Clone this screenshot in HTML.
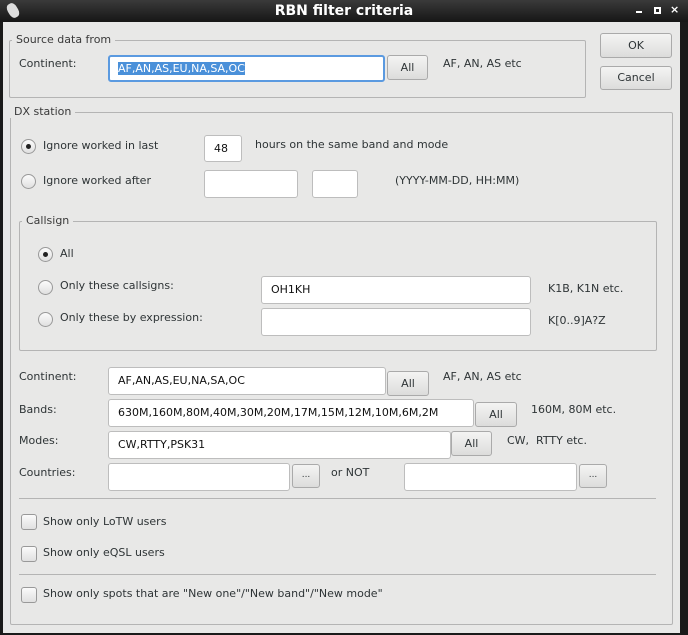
<!DOCTYPE html>
<html><head><style>
*{box-sizing:border-box;margin:0;padding:0}
body{width:688px;height:635px;background:#1a1a1a;position:relative;overflow:hidden;font-family:"DejaVu Sans","Liberation Sans",sans-serif;font-size:11px;color:#2e3436}
.a{position:absolute}
#win{position:absolute;left:3px;top:22px;width:677px;height:611px;background:#e8e8e7}
.tb{position:absolute;left:0;top:0;width:688px;height:22px;background:linear-gradient(#3a3a3a,#161616);color:#fff;font-weight:bold;font-size:14px;text-align:center;line-height:22px}
.grp{position:absolute;border:1px solid #b4b4b4;border-radius:2px}
.lg{position:absolute;background:#e8e8e7;padding:0 4px;color:#3a3a3a}
.f{position:absolute;background:#fff;border:1px solid #bdbdbd;border-radius:3px;padding-left:9px;line-height:25px;color:#111}
.b{position:absolute;border:1px solid #aaa;border-radius:3px;background:linear-gradient(#f4f4f3,#dcdcdb);text-align:center;color:#2e3436}
.r{position:absolute;width:15px;height:15px;border:1px solid #999;border-radius:50%;background:linear-gradient(#fbfbfb,#e0e0e0)}
.r.on::after{content:"";position:absolute;left:4px;top:4px;width:5px;height:5px;border-radius:50%;background:#222}
.c{position:absolute;width:16px;height:16px;border:1px solid #999;border-radius:3px;background:linear-gradient(#fbfbfb,#e0e0e0)}
.sep{position:absolute;height:1px;background:#b4b4b4}
</style></head><body>
<div class="tb">RBN filter criteria</div>
<div class="a" style="left:8px;top:3px;width:10px;height:15px;background:#ddd;border-radius:40%;transform:rotate(-30deg)"></div>
<div class="a" style="left:636px;top:11px;width:6px;height:2px;background:#fff"></div>
<div class="a" style="left:654px;top:7px;width:7px;height:7px;border:2px solid #fff"></div>
<div class="a" style="left:670px;top:3px;color:#fff;font-size:11px;font-weight:bold">×</div>
<div id="win"></div>

<div class="grp" style="left:9px;top:40px;width:577px;height:58px"></div>
<div class="lg" style="left:12px;top:33px">Source data from</div>
<div class="a" style="left:19px;top:57px">Continent:</div>
<div class="f" style="left:108px;top:55px;width:277px;height:27px;border:2px solid #5b9ae0;padding-left:8px;line-height:23px"><span style="background:#4a90d9;color:#fff">AF,AN,AS,EU,NA,SA,OC</span></div>
<div class="b" style="left:387px;top:55px;width:41px;height:25px;line-height:23px">All</div>
<div class="a" style="left:443px;top:57px">AF, AN, AS etc</div>
<div class="b" style="left:600px;top:33px;width:72px;height:25px;line-height:23px">OK</div>
<div class="b" style="left:600px;top:66px;width:72px;height:24px;line-height:22px">Cancel</div>

<div class="grp" style="left:10px;top:112px;width:663px;height:513px"></div>
<div class="lg" style="left:10px;top:105px">DX station</div>
<div class="r on" style="left:21px;top:139px"></div>
<div class="a" style="left:43px;top:139px">Ignore worked in last</div>
<div class="f" style="left:204px;top:135px;width:38px;height:27px;line-height:25px">48</div>
<div class="a" style="left:255px;top:138px">hours on the same band and mode</div>
<div class="r" style="left:21px;top:174px"></div>
<div class="a" style="left:43px;top:174px">Ignore worked after</div>
<div class="f" style="left:204px;top:170px;width:94px;height:28px"></div>
<div class="f" style="left:312px;top:170px;width:46px;height:28px"></div>
<div class="a" style="left:395px;top:174px">(YYYY-MM-DD, HH:MM)</div>

<div class="grp" style="left:19px;top:221px;width:638px;height:130px"></div>
<div class="lg" style="left:22px;top:214px">Callsign</div>
<div class="r on" style="left:38px;top:247px"></div>
<div class="a" style="left:60px;top:247px">All</div>
<div class="r" style="left:38px;top:280px"></div>
<div class="a" style="left:60px;top:279px">Only these callsigns:</div>
<div class="f" style="left:261px;top:276px;width:270px;height:28px">OH1KH</div>
<div class="a" style="left:548px;top:282px">K1B, K1N etc.</div>
<div class="r" style="left:38px;top:312px"></div>
<div class="a" style="left:60px;top:311px">Only these by expression:</div>
<div class="f" style="left:261px;top:308px;width:270px;height:28px"></div>
<div class="a" style="left:548px;top:314px">K[0..9]A?Z</div>

<div class="a" style="left:19px;top:370px">Continent:</div>
<div class="f" style="left:108px;top:367px;width:278px;height:28px">AF,AN,AS,EU,NA,SA,OC</div>
<div class="b" style="left:387px;top:371px;width:42px;height:25px;line-height:23px">All</div>
<div class="a" style="left:443px;top:370px">AF, AN, AS etc</div>
<div class="a" style="left:19px;top:403px">Bands:</div>
<div class="f" style="left:108px;top:399px;width:366px;height:28px">630M,160M,80M,40M,30M,20M,17M,15M,12M,10M,6M,2M</div>
<div class="b" style="left:475px;top:402px;width:42px;height:25px;line-height:23px">All</div>
<div class="a" style="left:531px;top:403px">160M, 80M etc.</div>
<div class="a" style="left:19px;top:434px">Modes:</div>
<div class="f" style="left:108px;top:431px;width:343px;height:28px">CW,RTTY,PSK31</div>
<div class="b" style="left:451px;top:431px;width:41px;height:25px;line-height:23px">All</div>
<div class="a" style="left:507px;top:434px">CW,&nbsp; RTTY etc.</div>
<div class="a" style="left:19px;top:466px">Countries:</div>
<div class="f" style="left:108px;top:463px;width:182px;height:28px"></div>
<div class="b" style="left:292px;top:464px;width:28px;height:24px;line-height:20px;font-size:9px">...</div>
<div class="a" style="left:331px;top:466px">or NOT</div>
<div class="f" style="left:404px;top:463px;width:173px;height:28px"></div>
<div class="b" style="left:579px;top:464px;width:28px;height:24px;line-height:20px;font-size:9px">...</div>

<div class="sep" style="left:19px;top:498px;width:637px"></div>
<div class="c" style="left:21px;top:514px"></div>
<div class="a" style="left:43px;top:515px">Show only LoTW users</div>
<div class="c" style="left:21px;top:546px"></div>
<div class="a" style="left:43px;top:546px">Show only eQSL users</div>
<div class="sep" style="left:19px;top:574px;width:637px"></div>
<div class="c" style="left:21px;top:587px"></div>
<div class="a" style="left:43px;top:587px">Show only spots that are "New one"/"New band"/"New mode"</div>
</body></html>
